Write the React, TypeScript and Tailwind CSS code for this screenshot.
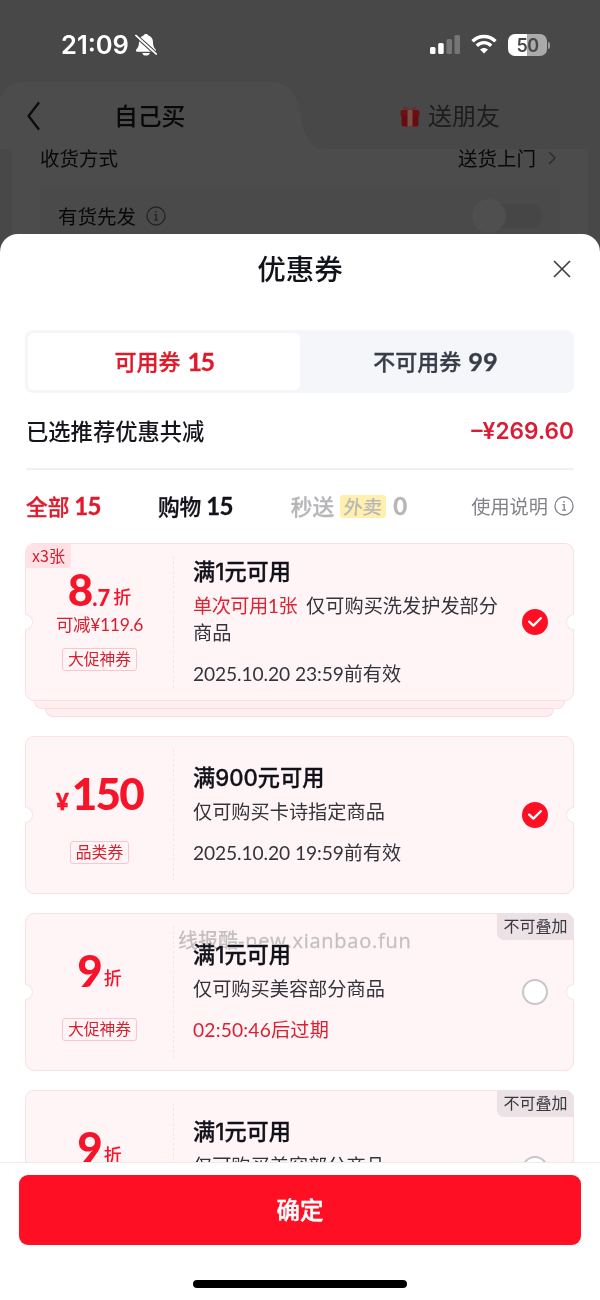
import React, { useState } from 'react';

interface Coupon {
  id: number;
  symbol?: string;
  amount: string;
  decimal?: string;
  unit?: string;
  saving?: string;
  tag: string;
  title: string;
  limit?: string;
  scope: string;
  date: string;
  urgent?: boolean;
  count?: string;
  corner?: string;
}

const coupons: Coupon[] = [
  {
    id: 1,
    amount: '8',
    decimal: '.7',
    unit: '折',
    saving: '可减¥119.6',
    tag: '大促神券',
    title: '满1元可用',
    limit: '单次可用1张',
    scope: '仅可购买洗发护发部分商品',
    date: '2025.10.20 23:59前有效',
    count: 'x3张',
  },
  {
    id: 2,
    symbol: '¥',
    amount: '150',
    tag: '品类券',
    title: '满900元可用',
    scope: '仅可购买卡诗指定商品',
    date: '2025.10.20 19:59前有效',
  },
  {
    id: 3,
    amount: '9',
    unit: '折',
    tag: '大促神券',
    title: '满1元可用',
    scope: '仅可购买美容部分商品',
    date: '02:50:46后过期',
    urgent: true,
    corner: '不可叠加',
  },
  {
    id: 4,
    amount: '9',
    unit: '折',
    tag: '大促神券',
    title: '满1元可用',
    scope: '仅可购买美容部分商品',
    date: '02:50:46后过期',
    urgent: true,
    corner: '不可叠加',
  },
];

function InfoIcon({ className }: { className?: string }) {
  return (
    <svg viewBox="0 0 20 20" className={className} fill="none" stroke="currentColor" strokeWidth="1.3">
      <circle cx="10" cy="10" r="9" />
      <path d="M8.4 8.6H10.2V14M8.2 14.1H12" />
      <circle cx="10" cy="5.8" r="0.9" fill="currentColor" stroke="none" />
    </svg>
  );
}

function StatusBar() {
  return (
    <div className="flex h-[82px] items-start pt-[31px] pr-[50px] pl-[61px] text-white">
      <span className="font-['Inter',sans-serif] text-[25.5px] leading-7 font-semibold">21:09</span>
      {/* 静音铃铛 */}
      <svg viewBox="0 0 22 24" className="mt-[2px] ml-[6px] h-6 w-[22px]">
        <path
          d="M11 1C9.700 1 8.900 1.600 8.600 2.400 5.500 3.400 4.100 5.800 4 9c-.1 4-.8 5.300-2.700 7.600-.8 1-.3 2.100.9 2.100h17.600c1.200 0 1.700-1.100.9-2.100C18.800 14.300 18.100 13 18 9c-.1-3.200-1.500-5.600-4.600-6.600C13.100 1.600 12.300 1 11 1z"
          fill="white"
        />
        <path d="M7.200 20h7.600c-.4 1.600-1.800 2.600-3.800 2.600S7.600 21.600 7.200 20z" fill="white" />
        <path d="M1.500 1.400 22.500 20.400" stroke="#484848" strokeWidth="1.300" />
        <path d="M1 2.600 21 21" stroke="white" strokeWidth="1.900" strokeLinecap="round" />
        <path d="M-.5 3.200 20.500 22.400" stroke="#484848" strokeWidth="1.100" />
      </svg>
      <div className="mt-[3px] ml-auto flex items-start">
        <svg viewBox="0 0 30 20" className="h-5 w-[30px]" fill="white">
          <rect x="0" y="13" width="5.500" height="7" rx="1.500" />
          <rect x="8.200" y="9" width="5.500" height="11" rx="1.500" />
          <rect x="16.500" y="5" width="5.500" height="15" rx="1.500" opacity="0.25" />
          <rect x="24.500" y="1" width="5.500" height="19" rx="1.500" opacity="0.25" />
        </svg>
        <svg viewBox="0 0 26 20" className="ml-[11px] h-5 w-[26px]" fill="none" stroke="white" strokeWidth="3.400">
          <path d="M1.500 7.300C8 .8 18 .8 24.500 7.300" />
          <path d="M5.800 11.700c4.200-4.100 10.200-4.100 14.400 0" />
          <path d="M13 19.600 9 15.500c2.300-2.100 5.700-2.100 8 0z" fill="white" stroke="none" />
        </svg>
        <div className="ml-[11px] flex items-center">
          <div className="flex h-[22px] w-[39px] items-center justify-center rounded-[7px] bg-linear-to-r from-white from-50% to-[#aaaaaa] to-50% font-['Inter',sans-serif] text-[18px] font-semibold tracking-[-0.5px] text-[#484848]">
            50
          </div>
          <div className="ml-px h-[7px] w-[2px] rounded-r-full bg-[#9a9a9a]" />
        </div>
      </div>
    </div>
  );
}

function OrderBackdrop() {
  return (
    <div className="h-[152px]">
      <div className="relative h-[67px]">
        <svg viewBox="0 0 600 67" className="absolute inset-0 h-[67px] w-[600px]">
          <path d="M0 18Q4 0 26 0H270Q290 0 297 18L303 44Q309 67 324 67H0Z" fill="#4c4c4c" />
        </svg>
        <div className="relative flex h-full items-center">
          <svg viewBox="0 0 14 30" className="ml-[26px] h-[30px] w-[14px]" fill="none" stroke="#0c0c0c" strokeWidth="2.400">
            <path d="M13 1.500 2.600 15 13 28.500" strokeLinejoin="round" />
          </svg>
          <span className="ml-[74px] w-[72px] pb-[2px] text-[23.8px] font-medium whitespace-nowrap text-[#080808]">自己买</span>
          <svg viewBox="0 0 20 22" className="ml-[214px] h-[22px] w-5">
            <path d="M10 5.500C6 1 3.500 1 3.500 2.800S6 5.500 10 5.500zM10 5.500c4-4.500 6.500-4.500 6.500-2.700S14 5.500 10 5.500z" fill="#65302a" />
            <rect x="0.500" y="5" width="19" height="7" rx="2" fill="#6c1014" />
            <rect x="1.500" y="10" width="17" height="11.500" rx="2.500" fill="#660c12" />
            <rect x="7.500" y="5" width="5" height="16.500" fill="#755146" />
          </svg>
          <span className="ml-[8px] pb-[2px] text-[24px] whitespace-nowrap text-[#1d1d1d]">送朋友</span>
        </div>
      </div>
      <div className="mx-3 h-[85px] bg-[#4c4c4c] px-7">
        <div className="flex h-[38px] items-start text-[19.5px] leading-[18px] text-[#080808]">
          <span>收货方式</span>
          <span className="ml-auto">送货上门</span>
          <svg viewBox="0 0 8 14" className="mt-[2px] mr-1 ml-3 h-[14px] w-2" fill="none" stroke="#2c2c2c" strokeWidth="1.500">
            <path d="m1 1 6 6-6 6" />
          </svg>
        </div>
        <div className="flex h-[47px] items-center rounded-t-md bg-[#4a4a4a] pt-[11px] pr-[18px] pl-[18px]">
          <span className="text-[19.5px] text-[#080808]">有货先发</span>
          <InfoIcon className="ml-[10px] h-5 w-5 text-[#242424]" />
          <div className="ml-auto flex h-6 w-[70px] items-center rounded-full bg-[#464646]">
            <div className="h-[34px] w-[34px] shrink-0 rounded-full bg-[#4f4f4f]" />
          </div>
        </div>
      </div>
    </div>
  );
}

function SelectMark({ checked }: { checked: boolean }) {
  if (!checked) {
    return <span className="block h-[26px] w-[26px] rounded-full border-2 border-[#c9c6c8] bg-white" />;
  }
  return (
    <span className="flex h-[26px] w-[26px] items-center justify-center rounded-full bg-[#ff0f23]">
      <svg viewBox="0 0 14 10" className="h-[10px] w-[14px]" fill="none" stroke="white" strokeWidth="2.300">
        <path d="m1.200 4.600 4.200 4L12.800 1.200" strokeLinecap="round" strokeLinejoin="round" />
      </svg>
    </span>
  );
}

function CouponCard({ coupon, checked, onToggle }: { coupon: Coupon; checked: boolean; onToggle: () => void }) {
  return (
    <div>
      <div
        onClick={onToggle}
        className="relative z-10 flex h-[158px] rounded-[9px] border border-[#fbdfe3] bg-[#fff5f6]"
      >
        {/* 两侧缺口 */}
        <span className="absolute top-[70px] -left-px h-4 w-2 rounded-r-full border border-l-0 border-[#fbe3e6] bg-white" />
        <span className="absolute top-[70px] -right-px h-4 w-2 rounded-l-full border border-r-0 border-[#fbe3e6] bg-white" />
        {coupon.count && (
          <span className="absolute top-0 left-0 flex h-6 w-[45px] items-center justify-center rounded-tl-[8px] rounded-br-[4px] bg-[#ffe1e6] pb-[3px] text-[16px] text-[#d3202e]">
            {coupon.count}
          </span>
        )}
        {coupon.corner && (
          <span className="absolute -top-px -right-px flex h-[27px] w-[77px] items-center justify-center rounded-tr-[9px] rounded-bl-[7px] bg-[#ece2e5] pb-[3px] text-[16px] text-[#38383f]">
            {coupon.corner}
          </span>
        )}

        <div
          className={`flex w-[147px] shrink-0 flex-col items-center text-[#f5142a] ${coupon.saving ? 'pt-[25px]' : 'pt-[36px]'}`}
        >
          <div className="flex h-10 items-baseline font-['Lato','Noto_Sans_CJK_SC',sans-serif] leading-10 font-black">
            {coupon.symbol && <span className="mr-[3px] text-[22px] [-webkit-text-stroke:0.5px]">{coupon.symbol}</span>}
            <span className="text-[44px] tracking-[-1.8px]">{coupon.amount}</span>
            {coupon.decimal && <span className="ml-[1px] text-[22px]">{coupon.decimal}</span>}
            {coupon.unit && (
              <span className="relative -top-[2px] ml-[3px] text-[18px] font-medium">{coupon.unit}</span>
            )}
          </div>
          {coupon.saving && (
            <span className="mt-[5px] h-[22px] font-['Lato','Noto_Sans_CJK_SC',sans-serif] text-[17.5px] leading-[22px] tracking-[-0.35px] text-[#d71f2f]">
              {coupon.saving}
            </span>
          )}
          <span
            className={`flex h-[23px] items-center rounded-[3px] border border-[#f8c6cc] px-[5px] pb-px text-[15.8px] text-[#d71f2f] ${coupon.saving ? 'mt-[12px]' : 'mt-[28px]'}`}
          >
            {coupon.tag}
          </span>
        </div>

        <div className="my-3 w-px shrink-0 border-l border-dashed border-[#fae3e6]" />

        <div className="flex w-[336px] shrink-0 flex-col justify-center pl-[19px] text-[19.2px] text-[#34343c]">
          <div className="h-[30px] font-['Inter','Noto_Sans_CJK_SC',sans-serif] text-[22.2px] leading-[28px] font-medium text-[#12121a] [-webkit-text-stroke:0.3px]">
            {coupon.title}
          </div>
          <div className="mt-[4px] font-['Lato','Noto_Sans_CJK_SC',sans-serif] leading-[27px]">
            {coupon.limit && <span className="mr-[9px] tracking-[-0.5px] text-[#dc2433]">{coupon.limit}</span>}
            {coupon.scope}
          </div>
          <div
            className={`mt-[15px] h-[26px] font-['Lato','Noto_Sans_CJK_SC',sans-serif] leading-[26px] whitespace-nowrap ${coupon.urgent ? 'tracking-[0.2px] text-[#dc1f30]' : 'tracking-[-0.1px]'}`}
          >
            {coupon.date}
          </div>
        </div>

        <div className="flex items-center pl-[12px]">
          <SelectMark checked={checked} />
        </div>
      </div>

      {/* 多张券叠放的底边 */}
      {coupon.count && (
        <>
          <div className="mx-[9px] h-2 rounded-b-[9px] border border-t-0 border-[#fbdce1] bg-[#ffeff1]" />
          <div className="mx-[20px] h-2 rounded-b-[9px] border border-t-0 border-[#fbdce1] bg-[#ffeef0]" />
        </>
      )}
    </div>
  );
}

export default function App() {
  const [tab, setTab] = useState<'usable' | 'unusable'>('usable');
  const [selected, setSelected] = useState<number[]>([1, 2]);

  const toggle = (id: number) => {
    setSelected((prev) => (prev.includes(id) ? prev.filter((n) => n !== id) : [...prev, id]));
  };

  return (
    <div className="relative flex h-[1300px] w-[600px] flex-col overflow-hidden bg-[#484848] font-['Noto_Sans_CJK_SC',sans-serif]">
      <StatusBar />
      <OrderBackdrop />

      <div className="flex min-h-0 flex-1 flex-col rounded-t-[18px] bg-white">
        <div className="flex h-[69px] items-center justify-between px-[27px]">
          <span className="w-6" />
          <h2 className="pb-px text-[28.5px] leading-none font-medium text-[#12121a]">优惠券</h2>
          <button className="flex w-6 justify-center pl-[2px]">
            <svg viewBox="0 0 18 18" className="mt-px h-[18px] w-[18px] shrink-0" fill="none" stroke="#404040" strokeWidth="1.700">
              <path d="m1 1 16 16M17 1 1 17" />
            </svg>
          </button>
        </div>

        <div className="mr-[26px] ml-[25px] mt-[27px] flex h-[63px] rounded-[8px] bg-[#f4f6fa] p-[3px] text-[22px] font-medium">
          <button
            onClick={() => setTab('usable')}
            className={`flex w-[272px] items-center justify-center gap-[7px] rounded-[6px] pb-[2px] [-webkit-text-stroke:0.3px] ${tab === 'usable' ? 'bg-white text-[#dd1c2b]' : 'text-[#383d47]'}`}
          >
            可用券 <span className="pt-[2px] font-['Lato',sans-serif] text-[25px] font-bold tracking-[-1.500px]">15</span>
          </button>
          <button
            onClick={() => setTab('unusable')}
            className={`flex flex-1 items-center justify-center gap-[7px] rounded-[6px] pb-[2px] [-webkit-text-stroke:0.3px] ${tab === 'unusable' ? 'bg-white text-[#dd1c2b]' : 'text-[#383d47]'}`}
          >
            不可用券 <span className="pt-[2px] font-['Lato',sans-serif] text-[25.5px] font-bold">99</span>
          </button>
        </div>

        <div className="mx-[26px] flex h-[77px] items-center justify-between border-b-2 border-[#f0f0f2] pt-px text-[22.3px] text-[#15151d]">
          <span className="font-medium">已选推荐优惠共减</span>
          <span className="pt-px font-['Inter',sans-serif] text-[22.7px] font-semibold text-[#dc1c35]">–¥269.60</span>
        </div>

        <div className="mx-[26px] flex h-[73px] shrink-0 items-center pb-px text-[21.7px] font-medium whitespace-nowrap [-webkit-text-stroke:0.3px]">
          <span className="text-[#e01a2b]">
            全部 <span className="font-['Lato',sans-serif] text-[24px] font-bold tracking-[-0.6px]">15</span>
          </span>
          <span className="ml-[57px] text-[#12121a]">
            购物 <span className="font-['Lato',sans-serif] text-[24px] font-bold tracking-[-0.6px]">15</span>
          </span>
          <span className="ml-[58px] flex items-center text-[#b6b6b9]">
            秒送
            <span className="mr-[7px] ml-[6px] flex h-[23px] w-[46px] items-center justify-center rounded-[3px] bg-[#fff0ae] text-[19px] font-normal">
              <span className="-skew-x-6">外卖</span>
            </span>
            <span className="font-['Lato',sans-serif] text-[24px] font-bold">0</span>
          </span>
          <span className="ml-auto flex items-center gap-[6px] text-[19.2px] font-normal text-[#82838a] [-webkit-text-stroke:0px]">
            使用说明
            <InfoIcon className="h-5 w-5" />
          </span>
        </div>

        <div className="min-h-0 flex-1 overflow-hidden pr-[26px] pl-[25px]">
          <div className="flex flex-col gap-[19px]">
            {coupons.map((coupon) => (
              <CouponCard
                key={coupon.id}
                coupon={coupon}
                checked={selected.includes(coupon.id)}
                onToggle={() => toggle(coupon.id)}
              />
            ))}
          </div>
        </div>

        <div className="flex h-[138px] shrink-0 flex-col items-center border-t border-[#ececee] bg-white pt-3">
          <button className="h-[70px] w-[562px] rounded-[9px] bg-[#ff0f23] text-[23.5px] font-medium text-white [-webkit-text-stroke:0.4px]">
            确定
          </button>
          <div className="mt-[35px] h-2 w-[214px] rounded-full bg-black" />
        </div>
      </div>

      {/* 水印 */}
      <div className="pointer-events-none absolute top-[925px] left-[178px] z-20 text-[20px] leading-[30px] font-medium whitespace-nowrap text-[#c4c0c1] mix-blend-darken">
        线报酷<span className="font-['Open_Sans',sans-serif] tracking-[0.75px] [-webkit-text-stroke:0.3px]">-new.xianbao.fun</span>
      </div>
    </div>
  );
}
